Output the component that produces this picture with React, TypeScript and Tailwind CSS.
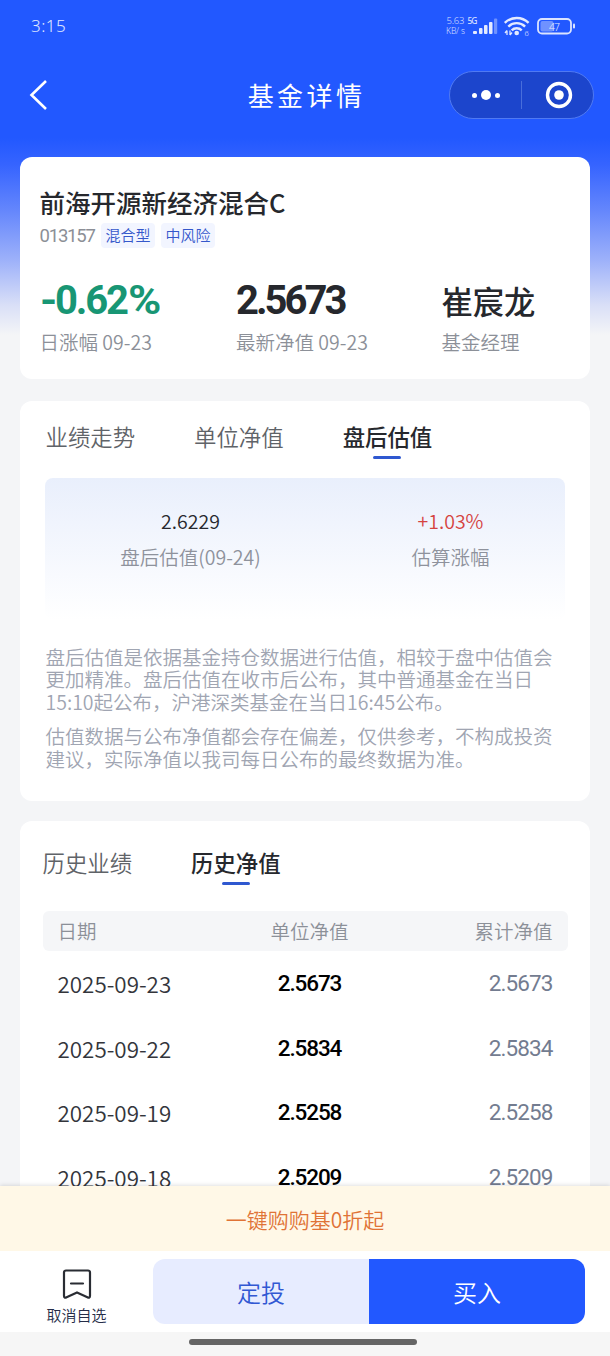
import React from 'react';

const numFont = "font-['Roboto','Noto_Sans_CJK_SC',sans-serif]";

const rows = [
  ['2025-09-23', '2.5673'],
  ['2025-09-22', '2.5834'],
  ['2025-09-19', '2.5258'],
  ['2025-09-18', '2.5209'],
];

function StatusIcons() {
  return (
    <svg width="132" height="26" viewBox="0 0 132 26" className="block" fill="#fff">
      <g fontFamily="Noto Sans, sans-serif" fill="#d3deff">
        <text x="0.500" y="10.500" fontSize="9.500" textLength="18" fontWeight="300">5.63</text>
        <text x="0" y="20.500" fontSize="8.500" textLength="19" fontWeight="300">KB/ s</text>
        <text x="21.500" y="10.500" fontSize="8.500" textLength="10" fontWeight="500">5G</text>
      </g>
      <g fill="#e3eaff">
        <rect x="27" y="18" width="4" height="3" rx="1" />
        <rect x="33" y="15" width="3.500" height="6" rx="1" />
        <rect x="38" y="12" width="3.500" height="9" rx="1" />
        <rect x="43" y="9" width="3.500" height="12" rx="1" />
        <rect x="48" y="5.500" width="3.200" height="15.500" rx="1" opacity=".4" />
      </g>
      <g fill="none" stroke="#e3eaff" strokeWidth="2.400">
        <path d="M58.800 9.800a17 17 0 0 1 23.800 0" />
        <path d="M62.300 13.600a12 12 0 0 1 16.800 0" />
        <path d="M65.700 17.300a7 7 0 0 1 10 0" />
      </g>
      <circle cx="70.700" cy="20" r="2.300" fill="#e3eaff" />
      <path d="M61 22v-4.500M59 20l2-2.500M64 17.500v4.500M66 19.500l-2 2.500" stroke="#e3eaff" strokeWidth="1.300" fill="none" />
      <text x="78.500" y="23" fontSize="7.500" fontFamily="Noto Sans, sans-serif" fill="#e3eaff">6</text>
      <rect x="92" y="6" width="33" height="14.500" rx="4" fill="none" stroke="#dbe4ff" strokeWidth="1.800" />
      <rect x="94.500" y="8" width="13" height="10.500" rx="2" fill="#6f92ff" />
      <rect x="127" y="10.500" width="2" height="5" rx="1" fill="#dbe4ff" />
      <text x="103" y="17.500" fontSize="10.500" fontFamily="Noto Sans, sans-serif" fill="#e3eaff" textLength="11">47</text>
    </svg>
  );
}

function Tab({ label, active }: { label: string; active?: boolean }) {
  return (
    <div className="flex flex-col items-center">
      <span className={active ? 'leading-8 font-medium text-[#26282d]' : 'leading-8 text-[#5f6368]'}>{label}</span>
      {active && <span className="mt-[4px] h-[3px] w-[28px] rounded-full bg-[#2f58d0]" />}
    </div>
  );
}

export default function App() {
  return (
    <div className="flex h-[1356px] w-[610px] flex-col overflow-hidden bg-[#f4f5f7] bg-[linear-gradient(to_bottom,#2258ff_0px,#2258ff_138px,#3664ff_165px,#6486fc_210px,#9db1fa_260px,#d9dff7_305px,#f4f5f7_335px)] font-['Noto_Sans_CJK_SC',sans-serif] font-[350] whitespace-nowrap">
      <header className="h-[157px] shrink-0 text-white">
        <div className="flex h-[54px] items-start justify-between pr-[32px] pl-[31px]">
          <span className="pt-[14px] font-['Noto_Sans',sans-serif] text-[17px] leading-6 font-light tracking-[0.5px] text-[#e0e8ff]">3:15</span>
          <div className="pt-[13px]"><StatusIcons /></div>
        </div>
        <div className="grid h-[82px] grid-cols-[161px_1fr_161px] items-center">
          <svg width="24" height="34" viewBox="0 0 24 34" className="ml-[26px]" fill="none" stroke="#fff" strokeWidth="2.600">
            <path d="M20 3 5.500 17 20 31" />
          </svg>
          <h1 className="pl-[3px] text-center text-[26px] leading-8 font-normal tracking-[3.400px]">基金详情</h1>
          <div className="flex h-[48px] w-[145px] items-center rounded-full border border-[#507af2] bg-[#1c45cc]">
            <div className="flex w-[71px] items-center justify-center gap-[4px]">
              <span className="size-[5px] rounded-full bg-white" />
              <span className="size-[10px] rounded-full bg-white" />
              <span className="size-[5px] rounded-full bg-white" />
            </div>
            <span className="h-[28px] w-px bg-[#496edb]" />
            <div className="flex flex-1 justify-center pl-[2px]">
              <svg width="28" height="28" viewBox="0 0 28 28">
                <circle cx="14" cy="14" r="11.500" fill="none" stroke="#fff" strokeWidth="3.400" />
                <circle cx="14" cy="14" r="4.800" fill="#fff" />
              </svg>
            </div>
          </div>
        </div>
      </header>

      <main className="flex min-h-0 flex-1 flex-col overflow-hidden px-[20px]">
        <section className="h-[222px] shrink-0 rounded-[12px] bg-white pt-[27px] pl-[19.500px]">
          <h2 className="text-[25.500px] leading-9 font-medium text-[#26282d]">前海开源新经济混合C</h2>
          <div className="mt-[2px] flex h-[26px] items-center text-[15px] text-[#3558cb]">
            <span className={`${numFont} w-[61.500px] pt-[3px] text-[18.500px] font-normal tracking-[-1.200px] text-[#8c8f96]`}>013157</span>
            <span className="rounded-[4px] bg-[#f2f5ff] px-[4.500px] pb-px leading-[24px]">混合型</span>
            <span className="ml-[6px] rounded-[4px] bg-[#f2f5ff] px-[4.500px] pb-px leading-[24px]">中风险</span>
          </div>
          <div className="mt-[29px] grid grid-cols-[196.500px_205.500px_1fr] text-[19.500px] text-[#8c9098]">
            <div>
              <div className={`${numFont} flex h-[48px] text-[40px] leading-[48px] font-bold tracking-[-2.200px] text-[#189674]`}>
                <span className="mr-[2px] inline-block origin-left scale-x-110">-</span>0.62<span className="ml-[1px] inline-block origin-left scale-x-[1.13]">%</span>
              </div>
              <div className="mt-[2.500px] leading-7">日涨幅 09-23</div>
            </div>
            <div>
              <div className={`${numFont} h-[48px] text-[40px] leading-[48px] font-bold tracking-[-3px] text-[#26282d]`}>2.5673</div>
              <div className="mt-[2.500px] leading-7">最新净值 09-23</div>
            </div>
            <div>
              <div className="h-[48px] text-[31.300px] leading-[47px] font-medium text-[#26282d]">崔宸龙</div>
              <div className="mt-[2.500px] leading-7">基金经理</div>
            </div>
          </div>
        </section>

        <section className="mt-[22px] h-[400px] shrink-0 rounded-[12px] bg-white px-[25px] pt-[19px]">
          <div className="flex h-[58px] gap-[59px] pl-[0.500px] text-[22.400px]">
            <Tab label="业绩走势" />
            <Tab label="单位净值" />
            <Tab label="盘后估值" active />
          </div>
          <div className="grid h-[142px] grid-cols-[291px_1fr] rounded-[8px] bg-gradient-to-b from-[#e9effc] to-white pt-[29px] text-center text-[19.500px]">
            <div>
              <div className="leading-7 text-[#26282d]">2.6229</div>
              <div className="mt-[8px] leading-7 text-[#8e929c]">盘后估值(09-24)</div>
            </div>
            <div>
              <div className="leading-7 text-[#d5433f]">+1.03%</div>
              <div className="mt-[8px] leading-7 text-[#8e929c]">估算涨幅</div>
            </div>
          </div>
          <div className="pt-[25.500px] pl-[0.500px] text-[19.500px] leading-[22.500px] text-[#a0a5b2]">
            <p>盘后估值是依据基金持仓数据进行估值，相较于盘中估值会<br />更加精准。盘后估值在收市后公布，其中普通基金在当日<br />15:10起公布，沪港深类基金在当日16:45公布。</p>
            <p className="mt-[12px]">估值数据与公布净值都会存在偏差，仅供参考，不构成投资<br />建议，实际净值以我司每日公布的最终数据为准。</p>
          </div>
        </section>

        <section className="mt-[20px] h-[480px] shrink-0 rounded-[12px] bg-white px-[22.500px] pt-[25px]">
          <div className="flex h-[65px] gap-[59px] text-[22.400px]">
            <Tab label="历史业绩" />
            <Tab label="历史净值" active />
          </div>
          <div className="grid h-[40px] w-[525px] grid-cols-3 items-center rounded-[6px] bg-[#f5f6f8] px-[15px] text-[19.500px] text-[#8c9098]">
            <span>日期</span>
            <span className="pl-[9px] text-center">单位净值</span>
            <span className="text-right">累计净值</span>
          </div>
          {rows.map(([date, value]) => (
            <div key={date} className="grid h-[64.500px] w-[525px] grid-cols-3 items-center px-[15px]">
              <span className="text-[22.400px] leading-8 text-[#33353b]">{date}</span>
              <span className={`${numFont} pl-[9px] text-center text-[22.500px] leading-8 font-medium tracking-[-1.100px] text-black`}>{value}</span>
              <span className={`${numFont} text-right text-[22.500px] leading-8 font-normal tracking-[-0.900px] text-[#737c90]`}>{value}</span>
            </div>
          ))}
        </section>
      </main>

      <footer className="z-10 shrink-0 bg-white shadow-[0_-1px_4px_rgba(0,0,0,0.12)]">
        <div className="flex h-[65px] items-center justify-center bg-[#fff8e7] pt-[3px] text-[21px] text-[#e07336]">一键购购基0折起</div>
        <div className="flex h-[81px] pt-[8px] pr-[25px]">
          <div className="flex w-[153px] flex-col items-center pt-[9px]">
            <svg width="30" height="32" viewBox="0 0 30 32" fill="none" stroke="#292c33" strokeWidth="2.200" strokeLinejoin="round" strokeLinecap="round">
              <path d="M4 2.500H26Q28 2.500 28 4.500V27.800Q28 30.500 25.400 29.200L15 24.400 4.600 29.200Q2 30.500 2 27.800V4.500Q2 2.500 4 2.500ZM9 15.500h12" />
            </svg>
            <span className="mt-[3px] text-[15px] leading-6 text-[#252d48]">取消自选</span>
          </div>
          <button className="h-[65px] flex-1 rounded-l-[12px] bg-[#e7ecff] text-[24px] text-[#3158d3]">定投</button>
          <button className="h-[65px] flex-1 rounded-r-[12px] bg-[#2258ff] text-[24px] text-white">买入</button>
        </div>
        <div className="flex h-[24px] justify-center bg-[#f6f6f6] pt-[7px]">
          <span className="mr-[4px] h-[6px] w-[228px] rounded-full bg-[#656565]" />
        </div>
      </footer>
    </div>
  );
}
